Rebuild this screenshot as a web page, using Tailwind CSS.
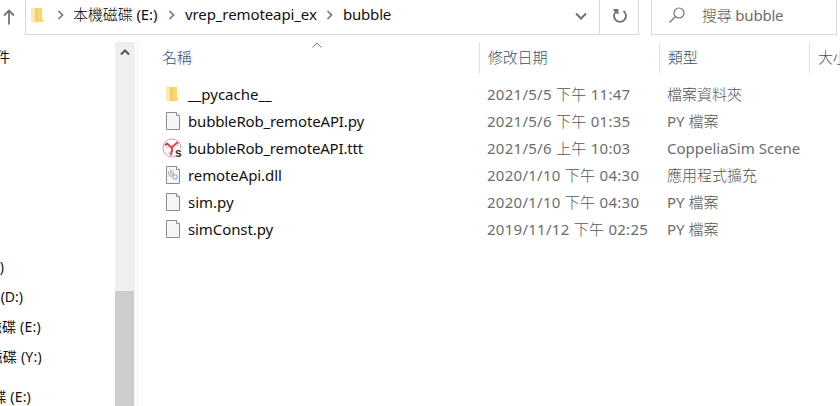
<!DOCTYPE html>
<html lang="zh-Hant">
<head>
<meta charset="utf-8">
<title>bubble</title>
<script src="https://cdn.jsdelivr.net/npm/@tailwindcss/browser@4"></script>
</head>
<body class="w-[840px] h-[406px] overflow-hidden bg-white font-['Noto_Sans','Noto_Sans_CJK_TC',sans-serif] text-[15px] leading-[27px] text-[#111] whitespace-nowrap">
<svg class="hidden">
  <symbol id="folder" viewBox="0 0 14 18"><path d="M3 2h9v11h1v3H3z" fill="#f3cf6b"/><path d="M8 2h4v11l1 1v2H8z" fill="#f8d775"/><path d="M1 1l4 1.500v15L1 15.500z" fill="#fee9a6"/></symbol>
  <symbol id="page" viewBox="0 0 16 20"><path d="M1.500 1.500h10l3 3v14h-13z" fill="#f5f6f7" stroke="#8d8d8d"/><path d="M11.500 1.500v3h3" fill="#fff" stroke="#8d8d8d"/></symbol>
  <symbol id="chev" viewBox="0 0 8 10"><path d="M1.500 1l4 4-4 4" fill="none" stroke="#777" stroke-width="1.700"/></symbol>
</svg>
<div class="flex flex-col h-full">
  <header class="flex h-[35px] shrink-0">
    <div class="w-[25px] pt-[9px] pl-[3px]">
      <svg class="w-3 h-4" viewBox="0 0 12 16" fill="none" stroke="#747474" stroke-width="1.800"><path d="M6 15.500V1.500M1 6.500l5-5 5 5"/></svg>
    </div>
    <div class="flex w-[575px] border-l border-b border-r border-[#d9d9d9] pl-[4px]">
      <svg class="w-[14px] h-[18px] mt-[6px]"><use href="#folder"/></svg>
      <svg class="w-2 h-[10px] ml-[13px] mt-[10px]"><use href="#chev"/></svg>
      <span class="ml-[8px] mt-[1px] w-[86px] tracking-[-0.1px]"><span class="font-light text-black">本機磁碟</span> (E:)</span>
      <svg class="w-2 h-[10px] ml-[9px] mt-[10px]"><use href="#chev"/></svg>
      <span class="ml-[9px] mt-[1px] w-[132px] tracking-[-0.1px]">vrep_remoteapi_ex</span>
      <svg class="w-2 h-[10px] ml-[9px] mt-[10px]"><use href="#chev"/></svg>
      <span class="ml-[9px] mt-[1px] tracking-[-0.2px]">bubble</span>
      <svg class="w-3 h-2 ml-auto mr-[12px] mt-[12px]" viewBox="0 0 12 8" fill="none" stroke="#707070" stroke-width="2"><path d="M1 1.500l5 5 5-5"/></svg>
    </div>
    <div class="w-[39px] border-r border-b border-[#d9d9d9] pl-[12px] pt-[8px]">
      <svg class="w-4 h-4" viewBox="0 0 16 16" fill="none" stroke="#747474" stroke-width="1.900"><path d="M11.500 3A6 6 0 1 1 4.500 3M1.500 2h4v4"/></svg>
    </div>
    <div class="flex w-[186px] ml-[12px] border-x border-b border-[#d9d9d9] pl-[17px]">
      <svg class="w-4 h-4 mt-[7px]" viewBox="0 0 16 16" fill="none" stroke="#777" stroke-width="1.200"><circle cx="10" cy="6" r="5"/><path d="M6.500 9.500L.500 15.500"/></svg>
      <span class="ml-[17px] mt-[2px] text-[#6d6d6d] tracking-[-0.2px]"><span class="font-light text-[#555]">搜尋</span> bubble</span>
    </div>
  </header>
  <div class="flex flex-1 pt-[7px]">
    <nav class="flex w-[115px] flex-col text-[14px] leading-[30px]">
      <div class="flex justify-end overflow-hidden w-[10px]">件</div>
      <div class="flex justify-end overflow-hidden w-[4px] mt-[180px]">)</div>
      <div class="flex justify-end overflow-hidden w-[23px]">(D:)</div>
      <div class="flex justify-end overflow-hidden w-[41px] tracking-[0.25px]">磁碟 (E:)</div>
      <div class="flex justify-end overflow-hidden w-[42px] tracking-[0.25px]">磁碟 (Y:)</div>
      <div class="flex justify-end overflow-hidden w-[31px] mt-[10px] h-[24px] tracking-[0.2px]">碟 (E:)</div>
    </nav>
    <div class="flex flex-col w-5 bg-[#efefef]">
      <svg class="w-[10px] h-[8px] ml-[5px] mt-[6px] shrink-0" viewBox="0 0 10 8" fill="none" stroke="#555" stroke-width="2"><path d="M1 6.500l4-4 4 4"/></svg>
      <div class="w-[19px] mt-auto h-[115px] bg-[#cdcdcd]"></div>
    </div>
    <main class="ml-[2px] border-l border-[#f0f0f0] flex-1">
      <div class="relative grid grid-cols-[342px_180px_150px_30px] h-[31px] leading-[30px] text-[#3c506b] font-light tracking-[-0.2px] overflow-hidden">
        <div class="border-r border-[#e2e2e2] pl-[24px]">名稱</div>
        <div class="border-r border-[#e2e2e2] pl-[8px]">修改日期</div>
        <div class="border-r border-[#e2e2e2] pl-[8px]">類型</div>
        <div class="pl-[8px]">大小</div>
        <svg class="absolute left-[174px] top-0 w-[10px] h-[6px]" viewBox="0 0 10 6" fill="none" stroke="#777"><path d="M.500 5.500L5 1l4.500 4.500"/></svg>
      </div>
      <div class="grid grid-cols-[24px_26px_299px_180px_1fr] auto-rows-[27px] pt-[8px] text-[#6d6d6d]">
        <svg class="col-start-2 w-[14px] h-[18px] ml-[3px] mt-[4px]"><use href="#folder"/></svg><span class="text-[#111]">__pycache__</span><span class="tracking-[0.27px]">2021/5/5 <span class="font-light text-[#555]">下午</span> 11:47</span><span class="font-light text-[#555]">檔案資料夾</span>
        <svg class="col-start-2 w-4 h-5 ml-[3px] mt-[3px]"><use href="#page"/></svg><span class="text-[#111] tracking-[-0.15px]">bubbleRob_remoteAPI.py</span><span class="tracking-[0.27px]">2021/5/6 <span class="font-light text-[#555]">下午</span> 01:35</span><span>PY <span class="font-light text-[#555]">檔案</span></span>
        <svg class="col-start-2 w-5 h-5 ml-0 mt-[3px]" viewBox="0 0 20 20"><circle cx="10" cy="10" r="9" fill="#fff" stroke="#e3989a"/><path d="M3 7.500l2-2 4.500 4 6.500-5.500M10 9v4l-1.500 4.500" fill="none" stroke="#dc3a3f" stroke-width="1.800"/><path d="M4 10l3-1M12 8l4-1M9 13l-3 3" fill="none" stroke="#eeaaac"/><path d="M13 11h7v9h-7z" fill="#fff" fill-opacity=".8"/><text x="13" y="18.500" font-family="Liberation Sans" font-size="12" font-weight="700" fill="#333">s</text></svg><span class="text-[#111] tracking-[-0.17px]">bubbleRob_remoteAPI.ttt</span><span class="tracking-[0.27px]">2021/5/6 <span class="font-light text-[#555]">上午</span> 10:03</span><span>CoppeliaSim Scene</span>
        <svg class="col-start-2 w-4 h-5 ml-[3px] mt-[3px]" viewBox="0 0 16 20"><use href="#page"/><g fill="none"><circle cx="6" cy="8.500" r="2.700" stroke="#888" stroke-dasharray="1.300 .5"/><circle cx="6" cy="8.500" r="1" stroke="#999" stroke-width=".8"/><circle cx="10" cy="12" r="2.200" stroke="#7fadd0" stroke-width="1.300" stroke-dasharray="1.300 .4"/></g></svg><span class="text-[#111] tracking-[-0.1px]">remoteApi.dll</span><span class="tracking-[0.27px]">2020/1/10 <span class="font-light text-[#555]">下午</span> 04:30</span><span class="font-light text-[#555]">應用程式擴充</span>
        <svg class="col-start-2 w-4 h-5 ml-[3px] mt-[3px]"><use href="#page"/></svg><span class="text-[#111]">sim.py</span><span class="tracking-[0.27px]">2020/1/10 <span class="font-light text-[#555]">下午</span> 04:30</span><span>PY <span class="font-light text-[#555]">檔案</span></span>
        <svg class="col-start-2 w-4 h-5 ml-[3px] mt-[3px]"><use href="#page"/></svg><span class="text-[#111] tracking-[-0.1px]">simConst.py</span><span class="tracking-[0.27px]">2019/11/12 <span class="font-light text-[#555]">下午</span> 02:25</span><span>PY <span class="font-light text-[#555]">檔案</span></span>
      </div>
    </main>
  </div>
</div>
</body>
</html>
